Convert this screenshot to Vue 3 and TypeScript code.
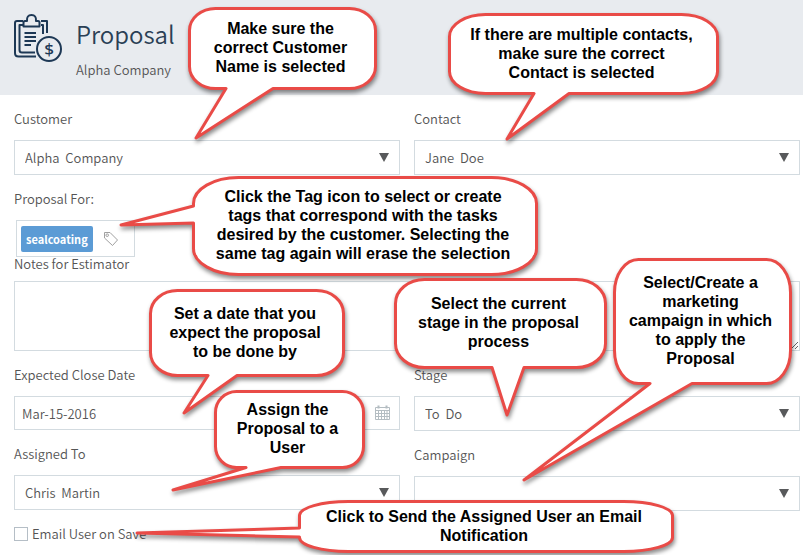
<script setup lang="ts">
import { ref } from 'vue'

interface Callout {
  id: string
  lines: string[]
  path: string
}

/* Outline of a bubble w by h with elliptical corners and a tail that leaves
   the bottom or left edge between `from` and `to` and ends at `tip`. */
function bubble(
  w: number,
  h: number,
  side: 'bottom' | 'left',
  from: number,
  to: number,
  tip: [number, number],
): string {
  const e = 1.5
  const r = w - e
  const b = h - e
  const rx = Math.round(w / 8) + 2
  const ry = Math.round(h / 4) + 1
  const arc = (x: number, y: number) => `A${rx} ${ry} 0 0 1 ${x} ${y}`
  const bottom = side === 'bottom' ? `H${to}L${tip[0]} ${tip[1]}L${from} ${b}` : ''
  const left = side === 'left' ? `V${to}L${tip[0]} ${tip[1]}L${e} ${from}` : ''
  return (
    `M${e + rx} ${e}H${r - rx}${arc(r, e + ry)}V${b - ry}${arc(r - rx, b)}` +
    `${bottom}H${e + rx}${arc(e, b - ry)}${left}V${e + ry}${arc(e + rx, e)}Z`
  )
}

const callouts: Callout[] = [
  {
    id: 'customer',
    lines: ['Make sure the', 'correct Customer', 'Name is selected'],
    path: bubble(189, 83, 'bottom', 38, 85, [8, 131]),
  },
  {
    id: 'contact',
    lines: ['If there are multiple contacts,', 'make sure the correct', 'Contact is selected'],
    path: bubble(271, 82, 'bottom', 86, 121, [59, 126]),
  },
  {
    id: 'tags',
    lines: [
      'Click the Tag icon to select or create',
      'tags that correspond with the tasks',
      'desired by the customer. Selecting the',
      'same tag again will erase the selection',
    ],
    path: bubble(346, 100, 'left', 30, 47, [-71, 49]),
  },
  {
    id: 'date',
    lines: ['Set a date that you', 'expect the proposal', 'to be done by'],
    path: bubble(196, 88, 'bottom', 59, 88, [35, 124]),
  },
  {
    id: 'assign',
    lines: ['Assign the', 'Proposal to a', 'User'],
    path: bubble(151, 79, 'bottom', 32, 67, [-41, 100]),
  },
  {
    id: 'stage',
    lines: ['Select the current', 'stage in the proposal', 'process'],
    path: bubble(213, 91, 'bottom', 98, 130, [113, 137]),
  },
  {
    id: 'campaign',
    lines: ['Select/Create a', 'marketing', 'campaign in which', 'to apply the', 'Proposal'],
    path: bubble(179, 127, 'bottom', 37, 79, [-89, 222]),
  },
  {
    id: 'email',
    lines: ['Click to Send the Assigned User an Email', 'Notification'],
    path: bubble(376, 53, 'left', 28, 37, [-161, 33]),
  },
]

const customer = ref('Alpha\u00a0 Company')
const contact = ref('Jane\u00a0 Doe')
const notes = ref('')
const closeDate = ref('Mar-15-2016')
const assignee = ref('Chris\u00a0 Martin')
const stage = ref('To\u00a0 Do')
const campaign = ref('')
const emailUser = ref(false)
</script>

<template>
  <div class="page">
    <header class="header">
      <svg class="header-icon" viewBox="0 0 50 50" aria-hidden="true">
        <g fill="none" stroke="#1d3855" stroke-width="2" stroke-linejoin="round">
          <path d="M10 8H4Q2 8 2 10V40Q2 43.5 5.500 43.5H23" />
          <path d="M10 12H6.500V37Q6.500 39.5 9 39.5H22M28 12H30V21" />
          <path d="M28 8H34V20" />
          <path d="M10.500 13.5V9.500Q10.500 8 12 8H14Q13.500 2 18.500 2T23 8H25Q26.500 8 26.500 9.500V13.5Z" />
          <path d="M11.500 20H23M11.500 24H23M11.500 28H23M11.500 32H18" />
          <circle cx="36" cy="36" r="12" />
        </g>
        <text x="36" y="42" text-anchor="middle" class="dollar">$</text>
      </svg>
      <div class="heading">
        <h1>Proposal</h1>
        <p>Alpha Company</p>
      </div>
    </header>

    <form class="form" @submit.prevent>
      <div class="columns">
        <div class="field">
          <label for="customer">Customer</label>
          <div class="select">
            <select id="customer" v-model="customer">
              <option>{{ customer }}</option>
            </select>
            <svg viewBox="0 0 10 9" aria-hidden="true"><path d="M0 0H10L5 9Z" /></svg>
          </div>
        </div>
        <div class="field">
          <label for="contact">Contact</label>
          <div class="select">
            <select id="contact" v-model="contact">
              <option>{{ contact }}</option>
            </select>
            <svg viewBox="0 0 10 9" aria-hidden="true"><path d="M0 0H10L5 9Z" /></svg>
          </div>
        </div>
      </div>

      <div>
        <div class="field">
          <span class="label">Proposal For:</span>
          <div class="tag-box">
            <span class="tag">sealcoating</span>
            <button type="button" class="tag-button" aria-label="Select tags">
              <svg viewBox="0 0 16 16" aria-hidden="true">
                <path d="M1.500 1.500H7L14.500 9L9.500 14.500L1.500 7Z" />
                <circle cx="4.200" cy="4.200" r="1.300" />
              </svg>
            </button>
          </div>
        </div>
        <div class="notes">
          <label for="notes">Notes for Estimator</label>
          <textarea id="notes" v-model="notes"></textarea>
        </div>
      </div>

      <div class="columns">
        <div class="stack">
          <div class="field">
            <label for="date">Expected Close Date</label>
            <div class="date-box">
              <input id="date" v-model="closeDate" type="text" />
              <svg viewBox="0 0 15 15" aria-hidden="true">
                <path d="M.5 2.500H14.500V14.500H.5ZM.5 5.500H14.500M.5 8.500H14.500M.5 11.500H14.500M3.500 5.500V14.500M6.500 5.500V14.500M9.500 5.500V14.500M12 5.500V14.500" />
                <path class="ring" d="M3.500 .5V3.500M11.500 .5V3.500" />
              </svg>
            </div>
          </div>
          <div class="field">
            <label for="assignee">Assigned To</label>
            <div class="select">
              <select id="assignee" v-model="assignee">
                <option>{{ assignee }}</option>
              </select>
              <svg viewBox="0 0 10 9" aria-hidden="true"><path d="M0 0H10L5 9Z" /></svg>
            </div>
          </div>
          <label class="check">
            <input v-model="emailUser" type="checkbox" />
            Email User on Save
          </label>
        </div>
        <div class="stack">
          <div class="field">
            <label for="stage">Stage</label>
            <div class="select">
              <select id="stage" v-model="stage">
                <option>{{ stage }}</option>
              </select>
              <svg viewBox="0 0 10 9" aria-hidden="true"><path d="M0 0H10L5 9Z" /></svg>
            </div>
          </div>
          <div class="field">
            <label for="campaign">Campaign</label>
            <div class="select">
              <select id="campaign" v-model="campaign">
                <option value=""></option>
              </select>
              <svg viewBox="0 0 10 9" aria-hidden="true"><path d="M0 0H10L5 9Z" /></svg>
            </div>
          </div>
        </div>
      </div>
    </form>

    <aside v-for="c in callouts" :key="c.id" class="callout" :class="c.id">
      <svg aria-hidden="true"><path :d="c.path" /></svg>
      <p>
        <span v-for="line in c.lines" :key="line">{{ line }}</span>
      </p>
    </aside>
  </div>
</template>

<style>
body {
  background: #fff;
}
</style>

<style scoped>
.page {
  position: relative;
  overflow: hidden;
  min-height: 100vh;
  box-sizing: border-box;
  font-family: 'Noto Sans CJK SC', 'Noto Sans', sans-serif;
  font-size: 13px;
  font-weight: 350;
  color: #555;
}

.header {
  display: flex;
  gap: 13px;
  height: 95px;
  box-sizing: border-box;
  padding: 13px;
  background: #e8ebef;
}

.header-icon {
  width: 50px;
  height: 50px;
  flex: none;
}

.dollar {
  font-family: 'Noto Sans', sans-serif;
  font-size: 17px;
  font-weight: 500;
  fill: #1d3855;
}

.heading {
  display: flex;
  flex-direction: column;
  gap: 13px;
  padding-top: 5px;
}

h1 {
  margin: 0;
  font-size: 24px;
  line-height: 32px;
  font-weight: 350;
  color: #2a3f55;
}

.heading p {
  margin: 0;
  line-height: 14px;
}

.form {
  display: flex;
  flex-direction: column;
  gap: 17px;
  padding: 17px 3px 12px 14px;
}

.columns {
  display: grid;
  grid-template-columns: 1fr 1fr;
  gap: 14px;
}

.stack {
  display: flex;
  flex-direction: column;
  gap: 17px;
}

.field {
  display: flex;
  flex-direction: column;
  gap: 14px;
}

.notes {
  display: flex;
  flex-direction: column;
  gap: 10px;
}

label,
.label {
  line-height: 14px;
}

.select,
.date-box {
  position: relative;
  display: flex;
}

select,
input[type='text'],
textarea {
  width: 100%;
  box-sizing: border-box;
  margin: 0;
  border: 1px solid #d3dbe0;
  border-radius: 0;
  background: #fff;
  font: inherit;
  color: inherit;
}

select {
  appearance: none;
  height: 35px;
  padding: 0 28px 0 10px;
}

input[type='text'] {
  height: 34px;
  padding: 0 28px 0 7px;
}

textarea {
  display: block;
  height: 70px;
}

.select svg {
  position: absolute;
  top: 13px;
  right: 11px;
  width: 10px;
  height: 9px;
  fill: #58595b;
  pointer-events: none;
}

.date-box svg {
  position: absolute;
  top: 9px;
  right: 10px;
  width: 15px;
  height: 15px;
  fill: none;
  stroke: #b4bdc2;
  stroke-width: 1;
}

.date-box .ring {
  stroke-width: 2;
}

.tag-box {
  display: flex;
  align-items: center;
  gap: 10px;
  align-self: flex-start;
  height: 37px;
  box-sizing: border-box;
  margin-left: 2px;
  padding: 0 15px 0 4px;
  border: 1px solid #d3dbe0;
}

.tag {
  padding: 0 5px;
  border-radius: 2px;
  background: #5b9bd5;
  font-size: 11px;
  line-height: 26px;
  font-weight: 700;
  color: #fff;
}

.tag-button {
  display: flex;
  padding: 0;
  border: 0;
  background: none;
}

.tag-button svg {
  width: 16px;
  height: 16px;
  fill: none;
  stroke: #a0a0a0;
  stroke-width: 1;
}

.check {
  display: flex;
  align-items: center;
  gap: 4px;
}

.check input {
  appearance: none;
  width: 14px;
  height: 14px;
  box-sizing: border-box;
  margin: 0;
  border: 1px solid #b5bec6;
  background: #fff;
}

.callout {
  position: absolute;
  display: flex;
  align-items: center;
  justify-content: center;
  box-sizing: border-box;
  padding: 0 4px 2px 0;
}

.callout svg {
  position: absolute;
  inset: 0;
  width: 100%;
  height: 100%;
  overflow: visible;
  fill: #fff;
  stroke: #e94b47;
  stroke-width: 3;
  stroke-linejoin: round;
  filter: drop-shadow(1px 3px 2px rgba(0, 0, 0, 0.45));
}

.callout p {
  position: relative;
  margin: 0;
  font-family: 'Liberation Sans', Arial, sans-serif;
  font-size: 16px;
  line-height: 19px;
  font-weight: 700;
  text-align: center;
  white-space: nowrap;
  color: #000;
}

.callout span {
  display: block;
}

.customer { left: 188px; top: 7px; width: 189px; height: 83px; }
.contact { left: 448px; top: 13px; width: 271px; height: 82px; }
.tags { left: 192px; top: 176px; width: 346px; height: 100px; }
.date { left: 149px; top: 289px; width: 196px; height: 88px; }
.assign { left: 214px; top: 390px; width: 151px; height: 79px; }
.stage { left: 394px; top: 278px; width: 213px; height: 91px; }
.campaign { left: 613px; top: 258px; width: 179px; height: 127px; }
.email { left: 298px; top: 500px; width: 376px; height: 53px; }
</style>
